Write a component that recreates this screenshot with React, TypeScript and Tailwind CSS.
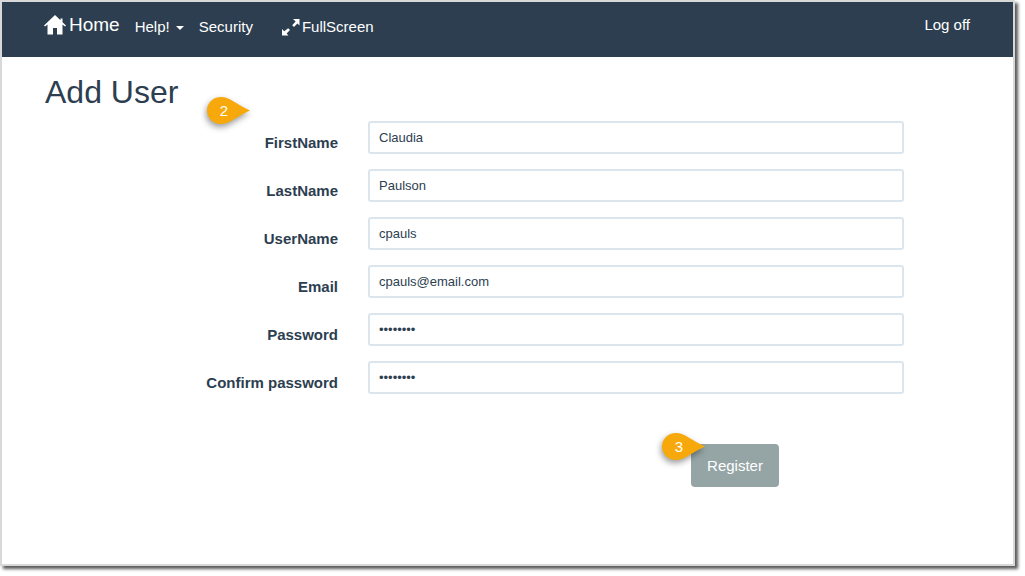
const fields = [
  { label: "FirstName", value: "Claudia" },
  { label: "LastName", value: "Paulson" },
  { label: "UserName", value: "cpauls" },
  { label: "Email", value: "cpauls@email.com" },
  { label: "Password", value: "12345678", type: "password" },
  { label: "Confirm password", value: "12345678", type: "password" },
];

const Callout = ({ n, className }: { n: number; className: string }) => (
  <div className={`absolute h-[28px] w-[44px] ${className}`}>
    <svg width="44" height="28" viewBox="0 0 44 28" className="absolute left-0 top-0 drop-shadow-[-1px_3px_3px_rgba(0,0,0,0.4)]">
      <path d="M14 0C23 0 30 8 43 13.5C30 19 23 27 14 27C6 27 0 21 0 13.5C0 6 6 0 14 0Z" fill="#f7a90c" />
    </svg>
    <span className="absolute left-[5px] top-[5px] w-[24px] text-center text-[15px] leading-[18px] text-white">{n}</span>
  </div>
);

const HomeIcon = () => (
  <svg width="22" height="20" viewBox="0 0 22 20" fill="#fff">
    <path d="M11 0L0 10.4L1 11.4L3.5 9.4V19.5H9V13H13V19.5H18.5V9.4L21 11.4L22 10.4L18.5 7.2V3.5H16.5V5.2Z" />
  </svg>
);

const FullIcon = () => (
  <svg width="18" height="17" viewBox="0 0 18 17" fill="#fff">
    <path d="M11 0H17.5V6.5L15.4 4.5L12 8L10.2 6.2L13.6 2.6Z" />
    <path d="M0 10V16.5H6.5L4.6 14.5L8 11L6.2 9.2L2.2 12.3Z" />
  </svg>
);

export default function App() {
  return (
    <div className="relative h-[576px] w-[1025px] overflow-hidden bg-white font-['Liberation_Sans',Arial,sans-serif] text-[#2c3e50]">
      <div className="h-[566px] w-[1015px] border-2 border-[#d8d8d8] bg-white shadow-[3px_3px_3px_rgba(0,0,0,0.65)]">
        <nav className="flex h-[55px] items-start bg-[#2c3e50] pl-[42px] pr-[43px] text-white">
          <a className="mt-[12px] flex items-center gap-[3px] text-[19px] leading-[22px]">
            <HomeIcon />
            <span>Home</span>
          </a>
          <a className="ml-[15px] mt-[16px] flex items-center gap-[6px] text-[15px] leading-[18px]">
            Help!
            <span className="mt-[2px] border-x-[4px] border-t-[4px] border-x-transparent border-t-white" />
          </a>
          <a className="ml-[15px] mt-[16px] text-[15px] leading-[18px]">Security</a>
          <a className="ml-[29px] mt-[15px] flex items-center gap-[2px] text-[15px] leading-[20px]">
            <FullIcon />
            <span>FullScreen</span>
          </a>
          <a className="ml-auto mt-[14px] text-[15px] leading-[18px]">Log off</a>
        </nav>

        <h1 className="ml-[43px] mt-[16px] text-[32px] leading-[38px]">Add User</h1>

        <form className="mt-[10px] flex flex-col gap-[15px]">
          {fields.map((f) => (
            <div key={f.label} className="flex items-start">
              <label className="mt-[13px] w-[336px] text-right text-[15px] font-bold leading-[18px]">{f.label}</label>
              <input
                readOnly
                type={f.type ?? "text"}
                value={f.value}
                className="ml-[30px] h-[33px] w-[536px] rounded-[3px] border-2 border-[#dce4ec] bg-white px-[9px] text-[13px] text-[#2c3e50] outline-none"
              />
            </div>
          ))}
        </form>

        <div className="ml-[689px] mt-[50px]">
          <button className="h-[43px] w-[88px] rounded-[4px] bg-[#95a5a6] pt-[2px] text-[15px] text-white">Register</button>
        </div>
      </div>
      <Callout n={2} className="left-[207px] top-[97px]" />
      <Callout n={3} className="left-[662px] top-[433px]" />
    </div>
  );
}
